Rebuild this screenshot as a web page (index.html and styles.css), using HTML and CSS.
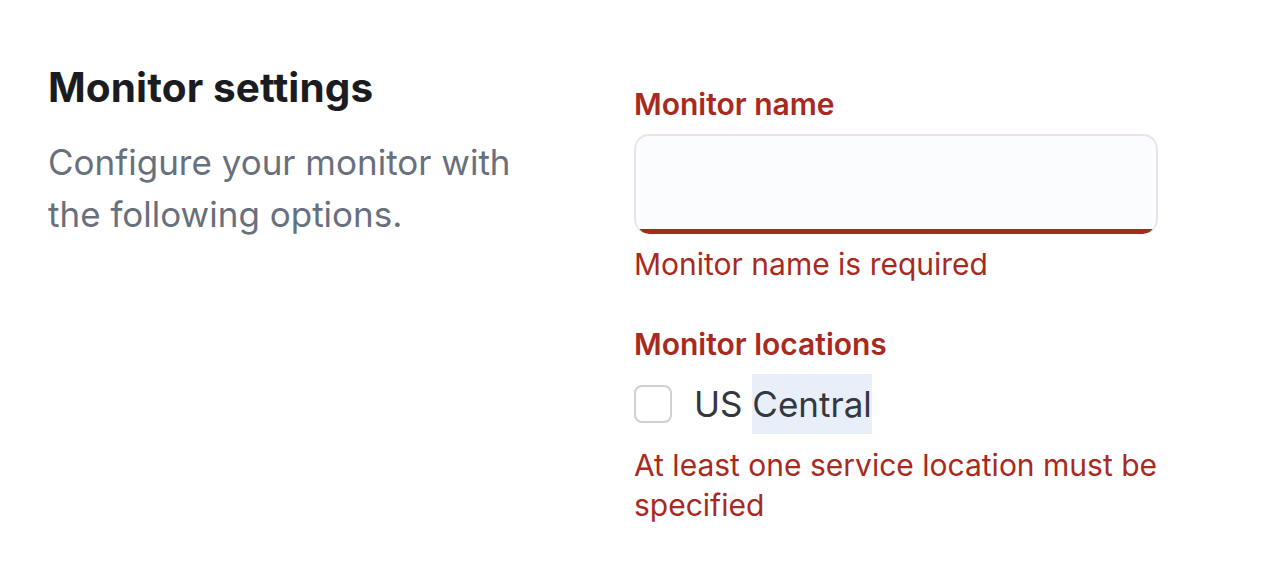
FILE: index.html
```html
<!DOCTYPE html>
<html lang="en">
<head>
<meta charset="utf-8">
<title>Monitor settings</title>
<link rel="stylesheet" href="styles.css">
</head>
<body>
<div class="page">
  <div class="intro">
    <h2 class="title">Monitor settings</h2>
    <p class="desc">Configure your monitor with the following options.</p>
  </div>
  <div class="fields">
    <div class="row">
      <label class="label" for="name">Monitor name</label>
      <input class="input" id="name" type="text">
      <div class="error">Monitor name is required</div>
    </div>
    <div class="row">
      <div class="label">Monitor locations</div>
      <div class="check-row">
        <span class="box"></span>
        <span class="check-label">US <span class="hl">Central</span></span>
      </div>
      <div class="error error-loc">At least one service location must be specified</div>
    </div>
  </div>
</div>
</body>
</html>
```

FILE: styles.css
```css
html, body {
  margin: 0;
  padding: 0;
  background: #ffffff;
}

body {
  font-family: Inter, "Noto Sans", "Liberation Sans", sans-serif;
}

.page {
  display: grid;
  grid-template-columns: 538px 524px;
  column-gap: 48px;
  padding: 58px 48px 0;
}

.title {
  margin: 0;
  font-size: 40.5px;
  line-height: 60px;
  font-weight: 700;
  letter-spacing: 0.1px;
  color: #1a1c21;
}

.desc {
  margin: 18px 0 0;
  max-width: 490px;
  font-size: 35px;
  line-height: 52px;
  color: #69707d;
}

.fields {
  padding-top: 26px;
}

.row + .row {
  margin-top: 40px;
}

.label {
  display: block;
  margin-bottom: 10px;
  font-size: 30px;
  line-height: 40px;
  font-weight: 600;
  color: #a8291e;
}

.input {
  display: block;
  box-sizing: border-box;
  width: 100%;
  height: 100px;
  margin: 0;
  padding: 0 20px;
  border: 2px solid #e3e6ef;
  border-bottom: 0;
  border-radius: 15px;
  background-color: #fbfcfd;
  background-image: linear-gradient(to top, #a8291e 0, #a8291e 5px, transparent 5px);
  background-origin: border-box;
  background-clip: border-box;
  font: inherit;
  outline: none;
}

.error {
  margin-top: 10px;
  font-size: 30px;
  line-height: 40px;
  color: #a8291e;
}

.error-loc {
  margin-top: 11px;
}

.check-row {
  display: flex;
  align-items: center;
  height: 60px;
}

.box {
  box-sizing: border-box;
  width: 38px;
  height: 38px;
  border: 2px solid #cdd0d5;
  border-radius: 8px;
  background: #ffffff;
}

.check-label {
  margin-left: 22px;
  font-size: 35px;
  line-height: 60px;
  color: #343741;
}

.hl {
  display: inline-block;
  background: #e9eff8;
}
```
